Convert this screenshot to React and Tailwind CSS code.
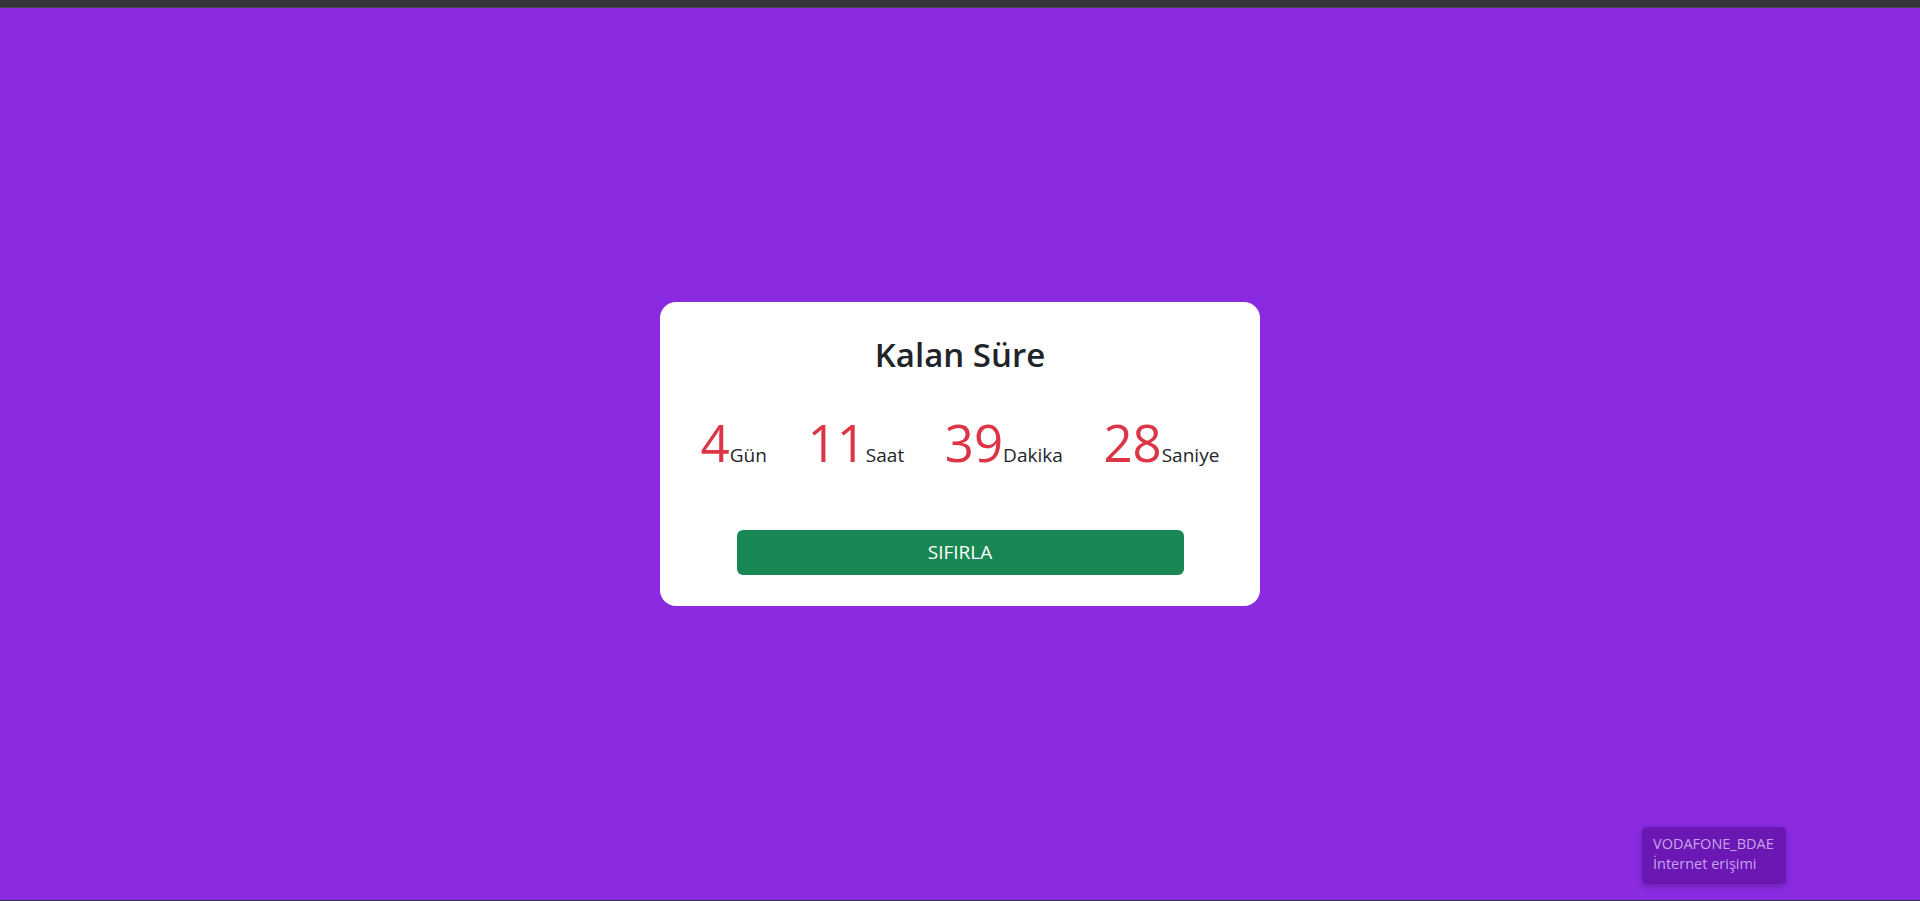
export default function App() {
  const items = [
    ["4", "Gün"],
    ["11", "Saat"],
    ["39", "Dakika"],
    ["28", "Saniye"],
  ];
  return (
    <div className="h-[901px] w-full flex flex-col overflow-hidden" style={{ fontFamily: '"Open Sans", "Noto Sans", sans-serif' }}>
      <div className="h-[8px] bg-[#35363a] border-b border-[#4a4b4f] shrink-0" />
      <div className="relative flex-1 bg-[#8a2be2] flex items-center justify-center">
        <div className="w-[600px] h-[304px] bg-white rounded-[16px] flex flex-col items-center pt-[33px]">
          <h2 className="text-[33px] font-semibold text-[#212529] leading-[1.2]">Kalan Süre</h2>
          <div className="w-full flex justify-evenly items-baseline mt-[42px]">
            {items.map(([n, l]) => (
              <div key={l} className="flex items-baseline">
                <span className="text-[51px] font-normal text-[#dc3545] leading-none">{n}</span>
                <span className="text-[19px] text-[#212529] leading-none">{l}</span>
              </div>
            ))}
          </div>
          <button className="mt-[62px] w-[447px] h-[45px] rounded-[6px] bg-[#198754] text-white text-[19px]">SIFIRLA</button>
        </div>
        <div className="absolute left-[1642px] top-[819px] w-[144px] h-[57px] rounded-[5px] bg-[#6a17b3] shadow-[0_2px_6px_rgba(0,0,0,0.25)] px-[11px] pt-[7px] text-[14.5px] leading-[20px] text-[#c8a3ef]">
          <div>VODAFONE_BDAE</div>
          <div>İnternet erişimi</div>
        </div>
      </div>
      <div className="h-[1px] bg-[#35363a] shrink-0" />
    </div>
  );
}
